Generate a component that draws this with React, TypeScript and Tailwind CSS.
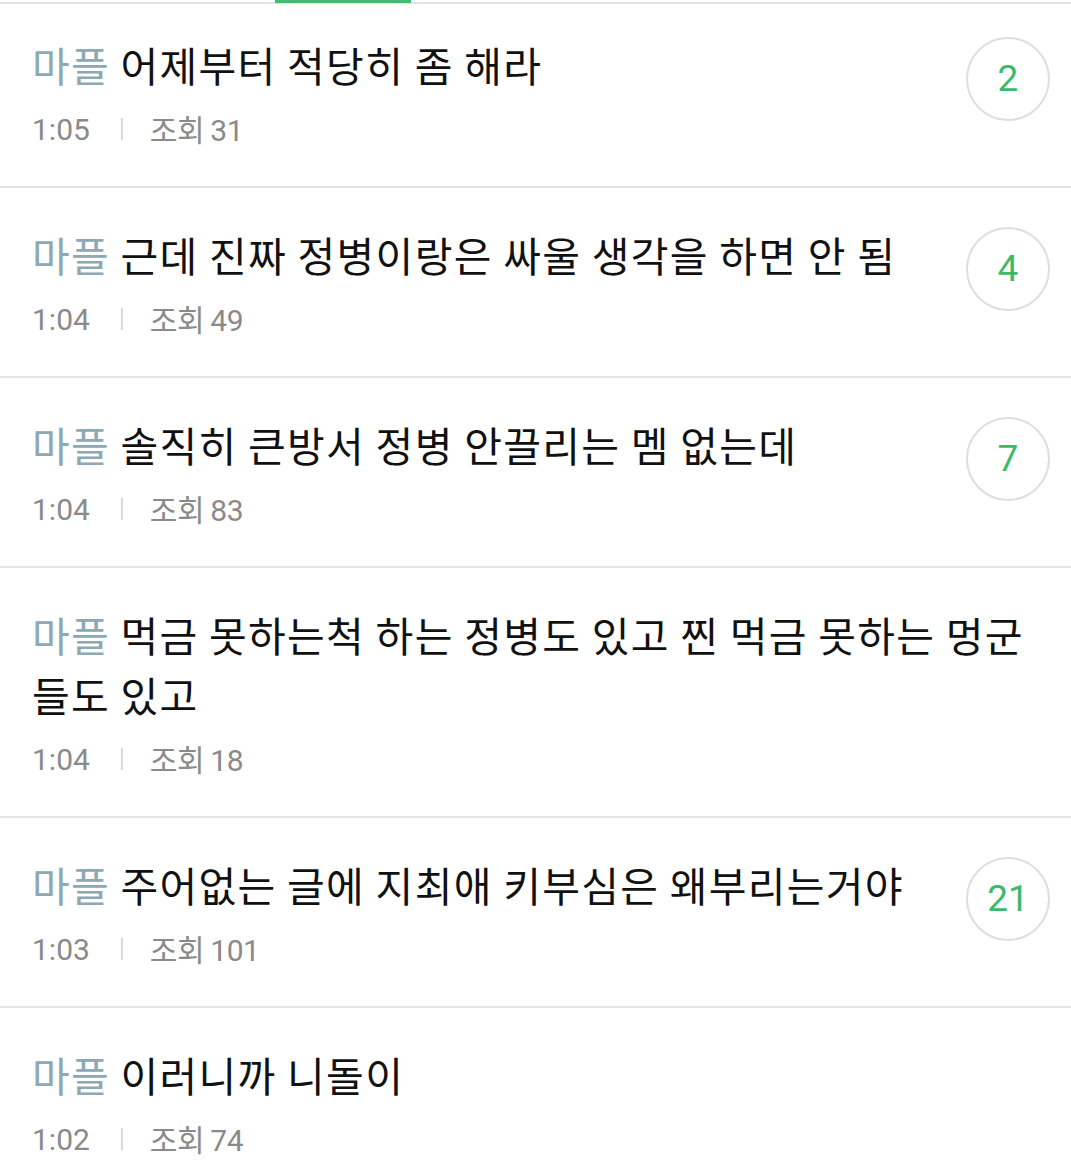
import React from "react";

type Post = { title: string; time: string; views: number; comments?: number };

const posts: Post[] = [
  { title: "어제부터 적당히 좀 해라", time: "1:05", views: 31, comments: 2 },
  { title: "근데 진짜 정병이랑은 싸울 생각을 하면 안 됨", time: "1:04", views: 49, comments: 4 },
  { title: "솔직히 큰방서 정병 안끌리는 멤 없는데", time: "1:04", views: 83, comments: 7 },
  { title: "먹금 못하는척 하는 정병도 있고 찐 먹금 못하는 멍군들도 있고", time: "1:04", views: 18 },
  { title: "주어없는 글에 지최애 키부심은 왜부리는거야", time: "1:03", views: 101, comments: 21 },
  { title: "이러니까 니돌이", time: "1:02", views: 74 },
];

const font = { fontFamily: '"Noto Sans CJK KR", "Noto Sans", sans-serif' };
const numFont = { fontFamily: 'Roboto, "Noto Sans CJK KR", sans-serif' };

function Row({ p, last }: { p: Post; last: boolean }) {
  return (
    <div
      className={
        "flex items-start pl-[32px] pr-[21px] pt-[36px] pb-[37px] " +
        (last ? "" : "border-b-[2px] border-[#e4e4e4]")
      }
    >
      <div className="flex-1 min-w-0">
        <div
          className="text-[41px] leading-[60px] text-[#111111] break-all tracking-[1.3px]"
          style={font}
        >
          <span className="text-[#8ea8b4]">마플</span> {p.title}
        </div>
        <div
          className="mt-[15px] flex items-center h-[40px] text-[30px] text-[#8a8a8a]"
          style={numFont}
        >
          <span>{p.time}</span>
          <span className="ml-[31px] mr-[27px] w-[2px] h-[22px] bg-[#d9d9d9]" />
          <span style={font} className="tracking-[-0.5px]">
            조회 <span style={numFont}>{p.views}</span>
          </span>
        </div>
      </div>
      {p.comments !== undefined ? (
        <div className="ml-[16px] mt-[3px] w-[84px] h-[84px] shrink-0 rounded-full border-[2px] border-[#dedede] flex items-center justify-center">
          <span className="text-[37px] text-[#3cba6a]" style={numFont}>
            {p.comments}
          </span>
        </div>
      ) : null}
    </div>
  );
}

export default function App() {
  return (
    <div className="relative w-[1071px] min-h-[1169px] bg-white overflow-hidden">
      <div className="absolute left-0 right-0 top-[2px] h-[2px] bg-[#e2e2e2] z-10" />
      <div className="absolute left-[275px] top-0 w-[136px] h-[3px] bg-[#45b96f] z-10" />
      <div className="mt-[-2px]">
        {posts.map((p, i) => (
          <Row key={i} p={p} last={i === posts.length - 1} />
        ))}
      </div>
    </div>
  );
}
